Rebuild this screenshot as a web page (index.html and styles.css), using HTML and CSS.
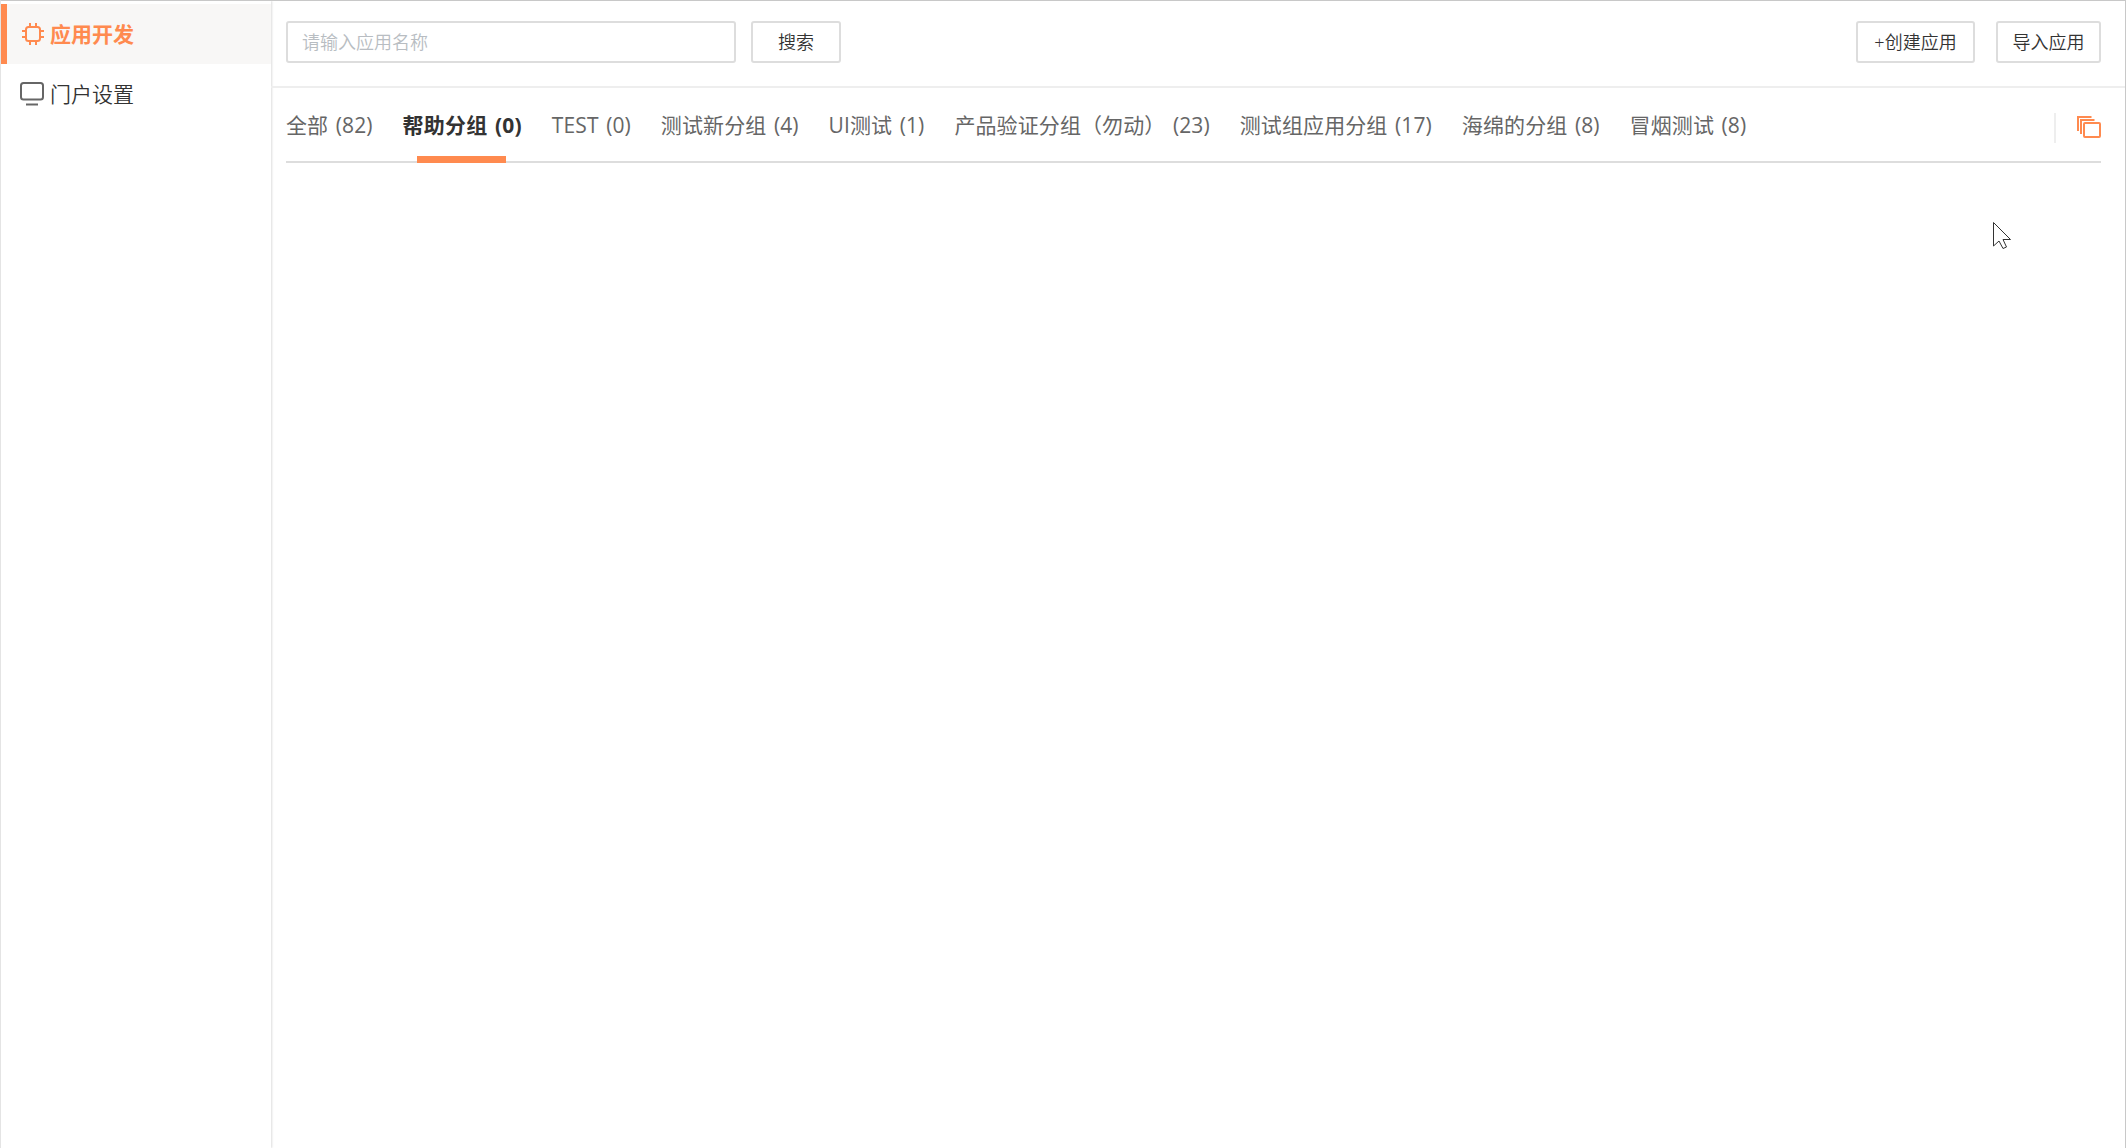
FILE: index.html
```html
<!DOCTYPE html>
<html lang="zh-CN">

<head>
    <meta charset="UTF-8">
    <meta name="viewport" content="width=device-width, initial-scale=1.0">
    <title>应用开发</title>
    <link rel="stylesheet" href="styles.css">
</head>

<body>

    <div class="page">
        <nav class="sidebar">
            <a class="menu-item active">
                <svg class="menu-icon" width="24" height="24" viewBox="0 0 24 24">
                    <rect x="5" y="5" width="14" height="14" rx="2.5" />
                    <path d="M9 1v4M15 1v4M9 19v4M15 19v4M1 9h4M1 15h4M19 9h4M19 15h4" />
                </svg>
                <span>应用开发</span>
            </a>
            <a class="menu-item">
                <svg class="menu-icon" width="24" height="24" viewBox="0 0 24 24">
                    <rect x="1" y="1" width="22" height="16.5" rx="2.5" />
                    <path d="M6 22.5h12" />
                </svg>
                <span>门户设置</span>
            </a>
        </nav>

        <main class="content">
            <div class="toolbar">
                <input class="search-input" type="text" placeholder="请输入应用名称">
                <button class="btn btn-search">搜索</button>
                <div class="actions">
                    <button class="btn btn-create">+创建应用</button>
                    <button class="btn btn-import">导入应用</button>
                </div>
            </div>

            <div class="tabs">
                <a class="tab">全部 (82)</a>
                <a class="tab active">帮助分组 (0)</a>
                <a class="tab">TEST (0)</a>
                <a class="tab">测试新分组 (4)</a>
                <a class="tab">UI测试 (1)</a>
                <a class="tab">产品验证分组（勿动） (23)</a>
                <a class="tab">测试组应用分组 (17)</a>
                <a class="tab">海绵的分组 (8)</a>
                <a class="tab">冒烟测试 (8)</a>
                <div class="tab-tools">
                    <svg width="25" height="22" viewBox="0 0 25 22">
                        <path d="M2 15V1h13.500M5 18V4h13.500" />
                        <rect x="8" y="7" width="16" height="14" rx="1" />
                    </svg>
                </div>
            </div>
        </main>
    </div>

    <svg class="cursor" width="20" height="29" viewBox="0 0 20 29">
        <path d="M1.500 1.500v23.500l5.500-5 4 7.500 3.500-1.500-3.500-7.500h7.500z" />
    </svg>

</body>

</html>
```
FILE: styles.css
```css
* {
    box-sizing: border-box;
}

body {
    margin: 0;
    font-family: "Open Sans", "Noto Sans CJK SC", sans-serif;
    font-size: 21px;
    color: #333;
    background-color: #fff;
}

.page {
    display: flex;
    height: 100vh;
    border: 1px solid #c8c8c8;
    border-left-color: #e4e4e4;
    border-bottom: none;
    overflow: hidden;
}

.sidebar {
    width: 270px;
    padding-top: 3px;
    box-shadow: 1px 0 2px #ddd;
}

.menu-item {
    display: flex;
    align-items: center;
    height: 60px;
    padding-left: 19px;
    line-height: 30px;
    font-weight: 350;
    color: #333;
}

.menu-item.active {
    padding-left: 14px;
    border-left: 6px solid #ff8a4f;
    background-color: #f8f7f6;
    color: #ff8a4f;
    font-weight: bold;
}

.menu-icon {
    margin-right: 6px;
    fill: none;
    stroke: #666;
    stroke-width: 2;
}

.active .menu-icon {
    margin-right: 5px;
    stroke: #ff8a4f;
}

.content {
    flex: 1;
}

.toolbar {
    display: flex;
    height: 87px;
    padding: 20px 24px 0 15px;
    border-bottom: 2px solid #eee;
}

.search-input {
    width: 450px;
    height: 42px;
    padding: 0 14px 1px;
    border: 2px solid #ddd;
    border-radius: 3px;
    font-family: inherit;
    font-size: 18px;
    font-weight: 350;
}

.search-input::placeholder {
    color: #b8bdc2;
}

.btn {
    height: 42px;
    padding: 0 0 2px;
    border: 2px solid #ddd;
    border-radius: 3px;
    background-color: #fff;
    color: #333;
    font-family: inherit;
    font-size: 18px;
    font-weight: 350;
}

.btn-search {
    width: 90px;
    margin-left: 15px;
}

.actions {
    display: flex;
    gap: 21px;
    margin-left: auto;
}

.btn-create {
    width: 119px;
}

.btn-import {
    width: 105px;
}

.tabs {
    display: flex;
    gap: 30px;
    height: 75px;
    margin: 0 24px 0 15px;
    border-bottom: 2px solid #ddd;
}

.tab {
    position: relative;
    line-height: 74px;
    font-weight: 380;
    color: #666;
    letter-spacing: 0.1px;
    word-spacing: 2px;
    white-space: nowrap;
}

.tab.active {
    color: #333;
    font-weight: bold;
    letter-spacing: 0.2px;
}

.tab.active::after {
    content: "";
    position: absolute;
    bottom: -2px;
    left: 50%;
    width: 89px;
    height: 7px;
    margin-left: -45px;
    background-color: #ff8a4f;
}

.tab-tools {
    display: flex;
    align-items: center;
    height: 30px;
    margin-top: 25px;
    margin-left: auto;
    padding-left: 20px;
    border-left: 2px solid #eee;
}

.tab-tools svg {
    margin-top: -3px;
    fill: none;
    stroke: #ff8a4f;
    stroke-width: 2;
}

.cursor {
    position: absolute;
    left: 1992px;
    top: 221px;
    fill: #fff;
    stroke: #333;
    stroke-width: 1;
}
```
